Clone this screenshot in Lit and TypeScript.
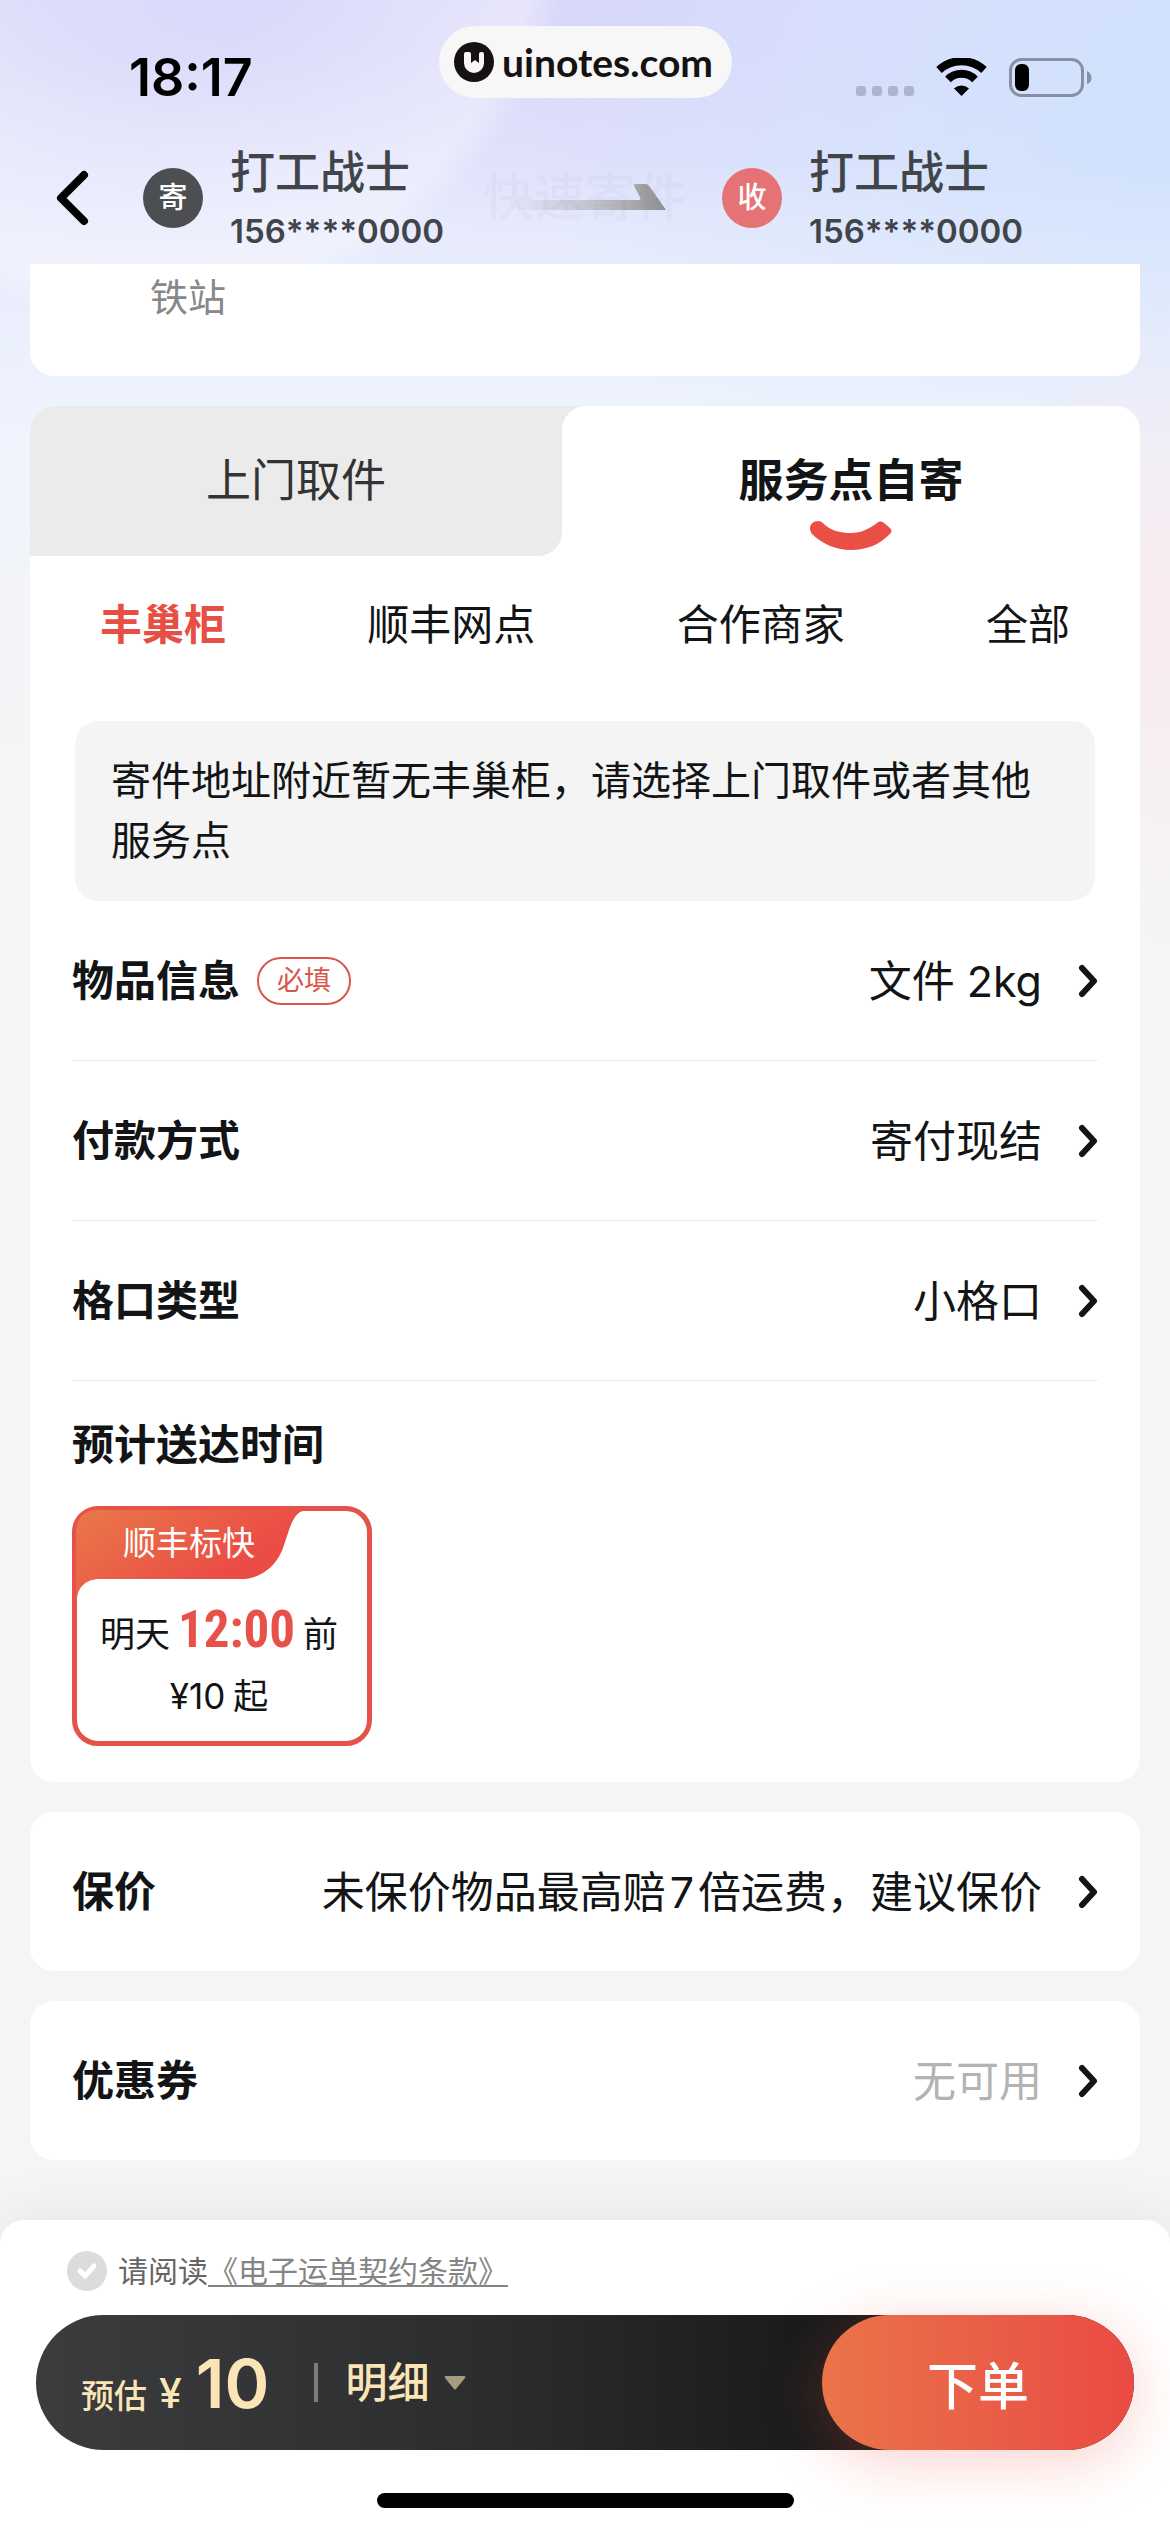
import { LitElement, html, css, nothing } from "lit";
import { customElement, property, state } from "lit/decorators.js";
import { classMap } from "lit/directives/class-map.js";

/* One tappable line of the order form: bold label, value and chevron. */
@customElement("order-row")
class OrderRow extends LitElement {
  @property() label = "";
  @property() value = "";
  @property() badge = "";
  @property({ type: Boolean }) muted = false;

  static styles = css`
    :host {
      display: block;
    }
    .row {
      display: flex;
      align-items: center;
      width: 100%;
      height: 159px;
      padding: 0;
      border: 0;
      background: none;
      color: #121415;
      font: inherit;
      font-size: 42px;
      line-height: 60px;
      text-align: left;
    }
    .label {
      font-weight: 600;
    }
    .badge {
      margin-left: 17px;
      padding: 0 18px;
      border: 2px solid #d9564d;
      border-radius: 24px;
      color: #d9564d;
      font-size: 27px;
      line-height: 44px;
    }
    .value {
      flex: 1;
      font-size: 43px;
      text-align: right;
    }
    .muted {
      color: #b3b3b3;
    }
    .chevron {
      width: 20px;
      height: 34px;
      margin-left: 36px;
    }
  `;

  render() {
    return html`
      <button class="row" type="button">
        <span class="label">${this.label}</span>
        ${this.badge ? html`<span class="badge">${this.badge}</span>` : nothing}
        <span class=${classMap({ value: true, muted: this.muted })}>${this.value}</span>
        <svg class="chevron" viewBox="0 0 20 34" fill="none" stroke="#121415" stroke-width="6"
          stroke-linecap="round" stroke-linejoin="round" aria-hidden="true">
          <path d="M4 4L16 17L4 30" />
        </svg>
      </button>
    `;
  }
}

/* Sender or receiver shown in the navigation bar. */
@customElement("party-info")
class PartyInfo extends LitElement {
  @property() tag = "";
  @property() name = "";
  @property() phone = "";
  @property({ type: Boolean }) receiver = false;

  static styles = css`
    :host {
      display: flex;
      align-items: center;
      gap: 27px;
      color: #414448;
    }
    .tag {
      width: 60px;
      border-radius: 50%;
      background: #4d4e52;
      color: #fff;
      font-size: 29px;
      font-weight: 500;
      line-height: 60px;
      text-align: center;
    }
    .receiver {
      background: #e57376;
    }
    .text {
      padding-top: 8px;
      line-height: 58px;
    }
    .name {
      font-size: 45px;
      font-weight: 500;
    }
    .phone {
      font-size: 33px;
      font-weight: 600;
    }
  `;

  render() {
    return html`
      <div class=${classMap({ tag: true, receiver: this.receiver })}>${this.tag}</div>
      <div class="text">
        <div class="name">${this.name}</div>
        <div class="phone">${this.phone}</div>
      </div>
    `;
  }
}

@customElement("app-root")
class AppRoot extends LitElement {
  @state() private mode = 1;
  @state() private place = 0;

  private modes = ["上门取件", "服务点自寄"];
  private places = ["丰巢柜", "顺丰网点", "合作商家", "全部"];

  static styles = css`
    :host {
      display: flex;
      flex-direction: column;
      min-height: 100vh;
      background:
        radial-gradient(circle at 150px -100px, rgba(255, 255, 255, 0) 160px, rgba(255, 255, 255, 0.34) 390px, rgba(255, 255, 255, 0) 424px) no-repeat,
        radial-gradient(ellipse 220px 320px at 100% 620px, rgba(250, 232, 235, 0.8), rgba(250, 232, 235, 0)) no-repeat,
        linear-gradient(to bottom, rgba(245, 247, 253, 0) 160px, rgba(245, 247, 253, 0.5) 420px, #f5f5f5 860px) no-repeat,
        radial-gradient(ellipse 640px 560px at 100% 100px, #cfe1fd, rgba(207, 225, 253, 0)) no-repeat,
        radial-gradient(ellipse 380px 180px at 230px 0, #d9d9fb, rgba(217, 217, 251, 0)) no-repeat,
        radial-gradient(ellipse 460px 240px at 620px 0, #d8d6fa, rgba(216, 214, 250, 0)) no-repeat,
        linear-gradient(to bottom, #e4e1f9, #e4e7fc 200px, #e8effe 420px, #f5f5f5 900px);
      color: #121415;
      font-family: Inter, "Noto Sans CJK SC", sans-serif;
    }
    .status {
      display: grid;
      grid-template-columns: 1fr auto 1fr;
      align-items: center;
      height: 108px;
      padding: 24px 78px 0 129px;
      color: #000;
    }
    .time {
      font-size: 52px;
      font-weight: 600;
      line-height: 60px;
    }
    .site {
      display: flex;
      align-items: center;
      gap: 8px;
      height: 72px;
      margin: 0 0 32px -50px;
      padding: 0 19px 0 15px;
      border-radius: 36px;
      background: #f7f7f7;
      color: #161212;
      font-family: Lato, sans-serif;
      font-size: 39px;
      font-weight: 700;
      line-height: 72px;
    }
    .site-mark {
      width: 40px;
      height: 40px;
    }
    .signals {
      display: flex;
      justify-content: flex-end;
    }
    .signals svg {
      width: 236px;
      height: 40px;
    }
    .nav {
      position: relative;
      display: grid;
      grid-template-columns: 143px 579fr 448fr;
      align-items: center;
      height: 132px;
    }
    .ghost {
      position: absolute;
      inset: 0;
      color: rgba(60, 60, 90, 0.03);
      font-size: 51px;
      font-weight: 500;
      line-height: 132px;
      text-align: center;
      margin: 0;
    }
    .back {
      height: 100px;
      padding: 0 0 0 56px;
      border: 0;
      background: none;
      text-align: left;
    }
    .back svg {
      display: block;
      width: 34px;
      height: 56px;
    }
    .sender {
      display: flex;
      align-items: center;
    }
    .arrow {
      flex: 1;
      display: flex;
      justify-content: center;
    }
    .arrow svg {
      width: 166px;
      height: 28px;
    }
    main {
      display: flex;
      flex-direction: column;
      gap: 30px;
      padding: 0 30px 60px;
    }
    .card {
      border-radius: 24px;
      background: #fff;
    }
    .padded {
      padding: 0 42px;
    }
    .address {
      box-sizing: border-box;
      height: 112px;
      padding: 4px 120px;
      border-radius: 0 0 24px 24px;
      color: #888;
      font-size: 38px;
      line-height: 58px;
    }
    .order {
      overflow: hidden;
    }
    .modes {
      display: grid;
      grid-template-columns: 532fr 578fr;
      background: #ebebeb;
    }
    .corner {
      background: #fff;
    }
    .mode {
      position: relative;
      width: 100%;
      height: 150px;
      padding: 0;
      border: 0;
      background: #ebebeb;
      color: #333;
      font: inherit;
      font-size: 45px;
      line-height: 60px;
    }
    .mode.left {
      border-radius: 24px 0 24px 0;
    }
    .mode.on {
      border-radius: 24px 24px 0 0;
      background: #fff;
      color: #121415;
      font-weight: 600;
    }
    .smile {
      position: absolute;
      bottom: 5px;
      left: calc(50% - 42px);
      width: 84px;
      height: 30px;
    }
    .places {
      display: flex;
      justify-content: space-between;
      padding: 39px 70px 66px;
    }
    .place {
      padding: 0;
      border: 0;
      background: none;
      color: #121415;
      font: inherit;
      font-size: 42px;
      line-height: 60px;
    }
    .place.on {
      color: #e74f45;
      font-weight: 600;
    }
    .notice {
      margin: 0 45px;
      padding: 30px 36px;
      border-radius: 24px;
      background: #f4f4f4;
      font-size: 40px;
      line-height: 60px;
    }
    .rows {
      padding: 0 42px;
    }
    .rows order-row {
      border-bottom: 1px solid #eee;
    }
    .eta-title {
      margin: 34px 42px 31px;
      font-size: 42px;
      font-weight: 600;
      line-height: 60px;
    }
    .option {
      position: relative;
      display: flex;
      flex-direction: column;
      box-sizing: border-box;
      width: 300px;
      height: 240px;
      margin: 0 42px 36px;
      border: 5px solid #e65149;
      border-radius: 26px;
      font-size: 35px;
      line-height: 62px;
    }
    .option input {
      position: absolute;
      inset: 0;
      margin: 0;
      opacity: 0;
    }
    .ribbon {
      position: absolute;
      top: -1px;
      left: -1px;
      width: 236px;
      height: 92px;
    }
    .option-name {
      position: relative;
      width: 224px;
      margin-bottom: 28px;
      color: #fff;
      font-size: 33px;
      line-height: 64px;
      text-align: center;
    }
    .option-line {
      display: flex;
      align-items: baseline;
      justify-content: center;
      gap: 8px;
      height: 62px;
      padding-right: 6px;
    }
    .clock {
      color: #e65149;
      font-family: "Liberation Sans Narrow", "Roboto Condensed", Roboto, sans-serif;
      font-size: 51px;
      font-weight: 700;
      line-height: 44px;
    }
    .footer {
      margin-top: auto;
      padding: 30px 36px 24px;
      border-radius: 24px 24px 0 0;
      background: #fff;
      box-shadow: 0 0 60px rgba(0, 0, 0, 0.08);
    }
    .terms {
      display: flex;
      align-items: center;
      height: 42px;
      margin: 0 31px 23px;
      color: #666;
      font-size: 30px;
      line-height: 42px;
    }
    .tick {
      display: grid;
      margin-right: 11px;
    }
    .tick input,
    .tick svg {
      grid-area: 1 / 1;
      width: 40px;
      height: 40px;
      margin: 0;
    }
    .tick input {
      appearance: none;
      border-radius: 50%;
      background: #dcdcdc;
    }
    .tick svg {
      pointer-events: none;
    }
    .terms a {
      color: #858585;
      text-decoration: underline 2px;
      text-decoration-skip-ink: none;
      text-underline-offset: 3px;
    }
    .bar {
      display: flex;
      align-items: center;
      height: 135px;
      border-radius: 68px;
      background: linear-gradient(to right, #3a3c3d, #2b2d2e 40%, #1a1b1c 70%);
      color: #fbe5b6;
    }
    .estimate {
      display: flex;
      align-items: baseline;
      margin-left: 45px;
      font-weight: 500;
      line-height: 40px;
    }
    .estimate-label {
      font-size: 33px;
    }
    .currency {
      margin: 0 14px 0 12px;
      font-size: 41px;
    }
    .amount {
      font-size: 68px;
      font-weight: 600;
      line-height: 80px;
    }
    .rule {
      width: 4px;
      height: 39px;
      margin: 0 27px 0 45px;
      background: #7c7c7b;
    }
    .detail {
      display: flex;
      align-items: center;
      gap: 14px;
      padding: 0;
      border: 0;
      background: none;
      color: inherit;
      font: inherit;
      font-size: 42px;
      font-weight: 500;
      line-height: 60px;
    }
    .detail svg {
      width: 24px;
      height: 18px;
    }
    .submit {
      width: 312px;
      height: 135px;
      margin-left: auto;
      padding: 0;
      border: 0;
      border-radius: 68px;
      background: linear-gradient(to right, #ea7449, #e95546 75%, #ea4a43);
      box-shadow: 0 12px 60px rgba(234, 80, 60, 0.26);
      color: #fff;
      font: inherit;
      font-size: 51px;
      font-weight: 500;
    }
    .home {
      width: 417px;
      height: 15px;
      margin: 43px auto 0;
      border-radius: 8px;
      background: #000;
    }
  `;

  private renderStatus() {
    return html`
      <div class="status">
        <span class="time">18:17</span>
        <div class="site">
          <svg class="site-mark" viewBox="0 0 40 40" aria-hidden="true">
            <circle cx="20" cy="20" r="20" fill="#161212" />
            <path d="M10 12Q10 10 12 10H15Q17 10 17 12V21L21 18L25 21V12Q25 10 27 10H28Q30 10 30 12V21A10 10 0 0 1 10 21Z" fill="#f7f7f7" />
          </svg>
          <span>uinotes.com</span>
        </div>
        <div class="signals">
          <svg viewBox="0 0 236 40" aria-hidden="true">
            <g fill="#aeb4cc">
              <rect x="0" y="28" width="10" height="10" rx="3" />
              <rect x="16" y="28" width="10" height="10" rx="3" />
              <rect x="32" y="28" width="10" height="10" rx="3" />
              <rect x="48" y="28" width="10" height="10" rx="3" />
            </g>
            <g fill="none" stroke="#000" stroke-width="8">
              <path d="M83 12A33 33 0 0 1 128 12" />
              <path d="M92 21.500A19 19 0 0 1 119 21.500" />
            </g>
            <path d="M105.500 38L98 30.500A11 11 0 0 1 113 30.500Z" fill="#000" />
            <rect x="154.500" y="1.500" width="72" height="36" rx="11" fill="none" stroke="#868fa3" stroke-width="3" />
            <rect x="159" y="6" width="14" height="27" rx="6" fill="#000" />
            <path d="M231 13C237 16 237 24 231 26Z" fill="#868fa3" />
          </svg>
        </div>
      </div>
    `;
  }

  private renderNav() {
    return html`
      <div class="nav">
        <h1 class="ghost">快速寄件</h1>
        <button class="back" type="button" aria-label="返回">
          <svg viewBox="0 0 34 56" fill="none" stroke="#000" stroke-width="8"
            stroke-linecap="round" stroke-linejoin="round" aria-hidden="true">
            <path d="M28 5L5 28L28 51" />
          </svg>
        </button>
        <div class="sender">
          <party-info tag="寄" name="打工战士" phone="156****0000"></party-info>
          <div class="arrow">
            <svg viewBox="0 0 166 28" aria-hidden="true">
              <defs>
                <linearGradient id="fade" x1="0" x2="1">
                  <stop offset="0" stop-color="#b8b8c0" stop-opacity="0" />
                  <stop offset="0.600" stop-color="#b6b6bb" stop-opacity="0.850" />
                  <stop offset="1" stop-color="#8e8e90" />
                </linearGradient>
              </defs>
              <path d="M10 16H139Q141 16 140 13L134 2Q133 0 136 0H146Q148 0 150 3L166 26H10Z" fill="url(#fade)" />
            </svg>
          </div>
        </div>
        <party-info receiver tag="收" name="打工战士" phone="156****0000"></party-info>
      </div>
    `;
  }

  private renderOrder() {
    return html`
      <section class="card order">
        <div class="modes" role="tablist">
          ${this.modes.map(
            (text, i) => html`
              <div class=${classMap({ corner: i === 0 })}>
                <button
                  class=${classMap({ mode: true, left: i === 0, on: i === this.mode })}
                  type="button"
                  role="tab"
                  aria-selected=${i === this.mode}
                  @click=${() => (this.mode = i)}
                >
                  ${text}
                  ${i === this.mode
                    ? html`<svg class="smile" viewBox="0 0 84 30" aria-hidden="true">
                        <path fill="#ea4f45" d="M3 13C-2 6 3 0 9 0C12 0 14 2 16 4C23 10 32 12 42 12C52 12 60 8 68 2C70 0 73 0 75 2L81 7C83 9 83 11 81 13C70 24 57 29 42 29C26 29 12 22 3 13Z" />
                      </svg>`
                    : nothing}
                </button>
              </div>
            `
          )}
        </div>
        <div class="places">
          ${this.places.map(
            (text, i) => html`<button
              class=${classMap({ place: true, on: i === this.place })}
              type="button"
              @click=${() => (this.place = i)}
            >${text}</button>`
          )}
        </div>
        <div class="notice">寄件地址附近暂无丰巢柜，请选择上门取件或者其他服务点</div>
        <div class="rows">
          <order-row label="物品信息" badge="必填" value="文件 2kg"></order-row>
          <order-row label="付款方式" value="寄付现结"></order-row>
          <order-row label="格口类型" value="小格口"></order-row>
        </div>
        <h2 class="eta-title">预计送达时间</h2>
        <label class="option">
          <input type="radio" name="service" checked />
          <svg class="ribbon" viewBox="-1 -1 236 92" aria-hidden="true">
            <defs>
              <linearGradient id="warm" x1="0" y1="0.200" x2="0.700" y2="0.600">
                <stop offset="0" stop-color="#e97448" />
                <stop offset="1" stop-color="#eb4c45" />
              </linearGradient>
            </defs>
            <path fill="url(#warm)" d="M20 -1H232C222 -1 218 4 213 16L207 34C201 54 185 68 164 68H23C8 68 0 77 0 90H-1V20Q0 0 20 -1Z" />
          </svg>
          <span class="option-name">顺丰标快</span>
          <span class="option-line"><span>明天</span><span class="clock">12:00</span><span>前</span></span>
          <span class="option-line"><span>¥10</span><span>起</span></span>
        </label>
      </section>
    `;
  }

  private renderFooter() {
    return html`
      <footer class="footer">
        <div class="terms">
          <span class="tick">
            <input id="agree" type="checkbox" />
            <svg viewBox="0 0 40 40" fill="none" stroke="#fff" stroke-width="5"
              stroke-linecap="round" stroke-linejoin="round" aria-hidden="true">
              <path d="M13 20L18 25L27 15" />
            </svg>
          </span>
          <label for="agree">请阅读</label><a href="#terms">《电子运单契约条款》</a>
        </div>
        <div class="bar">
          <div class="estimate">
            <span class="estimate-label">预估</span>
            <span class="currency">¥</span>
            <span class="amount">10</span>
          </div>
          <div class="rule"></div>
          <button class="detail" type="button">
            明细
            <svg viewBox="0 0 24 18" aria-hidden="true">
              <path d="M3 2H21Q23 2 22 4L13 15Q12 16 11 15L2 4Q1 2 3 2Z" fill="#a79b7e" />
            </svg>
          </button>
          <button class="submit" type="button">下单</button>
        </div>
        <div class="home"></div>
      </footer>
    `;
  }

  render() {
    return html`
      ${this.renderStatus()} ${this.renderNav()}
      <main>
        <section class="card address">铁站</section>
        ${this.renderOrder()}
        <section class="card padded">
          <order-row label="保价" value="未保价物品最高赔\u200a7\u200a倍运费，建议保价"></order-row>
        </section>
        <section class="card padded">
          <order-row label="优惠券" value="无可用" muted></order-row>
        </section>
      </main>
      ${this.renderFooter()}
    `;
  }
}
